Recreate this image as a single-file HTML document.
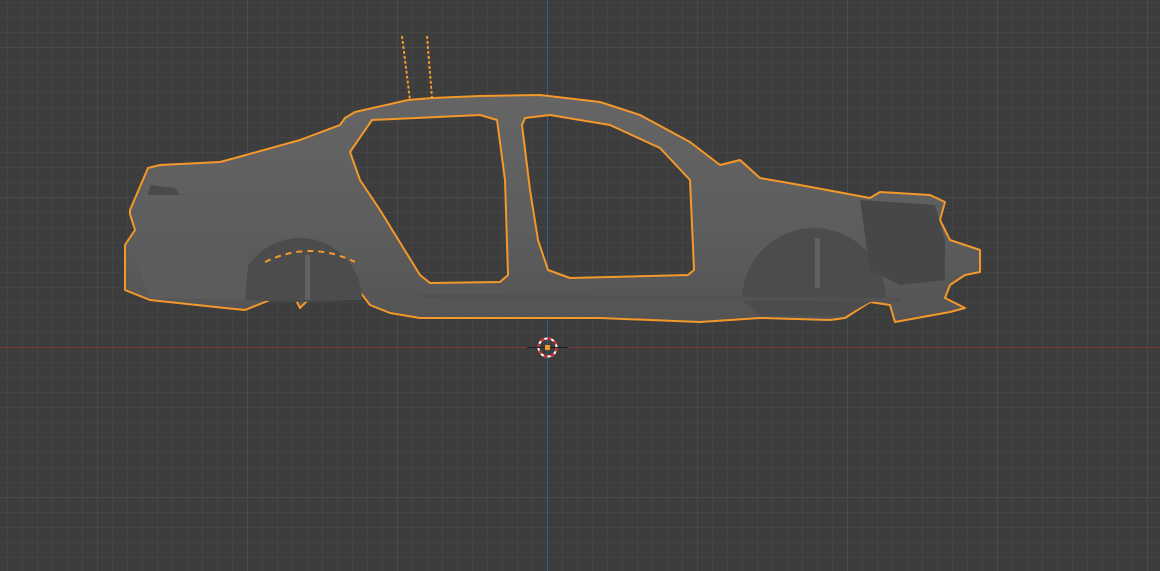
<!DOCTYPE html>
<html><head><style>
html,body{margin:0;padding:0;background:#3d3d3d;width:1160px;height:571px;overflow:hidden}
svg{display:block}
</style></head><body>
<svg width="1160" height="571" viewBox="0 0 1160 571">
<defs>
<pattern id="g" x="7" y="2" width="15" height="15" patternUnits="userSpaceOnUse">
<path d="M0 0.5H15M0.5 0V15" stroke="#444" stroke-width="1" fill="none"/>
</pattern>
<pattern id="G" x="97" y="47" width="150" height="150" patternUnits="userSpaceOnUse">
<path d="M0 0.5H150M0.5 0V150" stroke="#4a4a4a" stroke-width="1" fill="none"/>
</pattern>
<linearGradient id="body" x1="0" y1="0" x2="0" y2="1">
<stop offset="0" stop-color="#656565"/><stop offset="0.6" stop-color="#5d5d5d"/><stop offset="1" stop-color="#545454"/>
</linearGradient>
</defs>
<rect width="1160" height="571" fill="#3d3d3d"/>
<rect width="1160" height="571" fill="url(#g)"/>
<rect width="1160" height="571" fill="url(#G)"/>
<line x1="0" y1="347.5" x2="1160" y2="347.5" stroke="#7a3a3a" stroke-width="1"/>
<line x1="547.5" y1="0" x2="547.5" y2="571" stroke="#3d5a85" stroke-width="1"/>

<path fill-rule="evenodd" fill="url(#body)" stroke="#f4982a" stroke-width="2" stroke-linejoin="round" d="
M130 210 L148 168 L160 165 L220 162 L235 158 L300 140 L340 125 L345 118 L355 112 L408 100 L432 98 L480 96 L540 95 L600 102 L640 115 L690 142 L720 165 L740 160 L760 178 L800 185 L870 198 L880 192 L930 195 L945 202 L940 220 L950 240 L965 245 L980 250 L980 272 L965 275 L950 285 L945 298 L965 308 L950 312 L895 322 L890 305 L870 302 L845 318 L830 320 L760 318 L700 322 L600 318 L420 318 L390 313 L370 305 L360 292 L310 298 L300 308 L295 298 L270 300 L245 310 L225 308 L150 300 L125 290 L125 245 L135 230 L130 214 Z
M350 152 L372 120 L480 115 L497 120 L505 180 L508 275 L500 282 L430 283 L420 275 L380 210 L360 180 Z
M525 118 L550 115 L610 125 L660 148 L690 180 L694 270 L688 275 L570 278 L548 270 L538 240 L530 190 L522 125 Z"/>

<path d="M238 300 A62 62 0 0 1 362 300 L360 300 L300 302 Z" fill="#4c4c4c"/>
<path d="M742 300 A72 72 0 0 1 886 300 L870 302 L845 316 L760 316 Z" fill="#4c4c4c"/>
<path d="M130 245 L250 245 L245 300 L150 298 Z" fill="#5c5c5c"/>
<path d="M860 200 L935 205 L945 240 L945 280 L900 285 L870 270 Z" fill="#474747"/>
<path d="M420 296 L900 300" stroke="#525252" stroke-width="4"/>
<path d="M150 185 L175 188 L180 195 L148 195 Z" fill="#4a4a4a"/>
<path d="M265 262 Q310 240 355 262" stroke="#f4982a" stroke-width="2" fill="none" stroke-dasharray="6 5"/>
<rect x="305" y="255" width="5" height="45" fill="#626262"/>
<rect x="815" y="238" width="5" height="50" fill="#626262"/>
<path d="M402 36 L410 100 M427 36 L432 98" stroke="#f4982a" stroke-width="2" stroke-dasharray="3 2"/>

<circle cx="547.5" cy="347.5" r="9" fill="none" stroke="#fff" stroke-width="2"/>
<circle cx="547.5" cy="347.5" r="9" fill="none" stroke="#d22" stroke-width="2" stroke-dasharray="4 3"/>
<line x1="527" y1="347.5" x2="568" y2="347.5" stroke="#222" stroke-width="1"/>
<rect x="545" y="345" width="5" height="5" fill="#f4982a"/>
</svg>
</body></html>
